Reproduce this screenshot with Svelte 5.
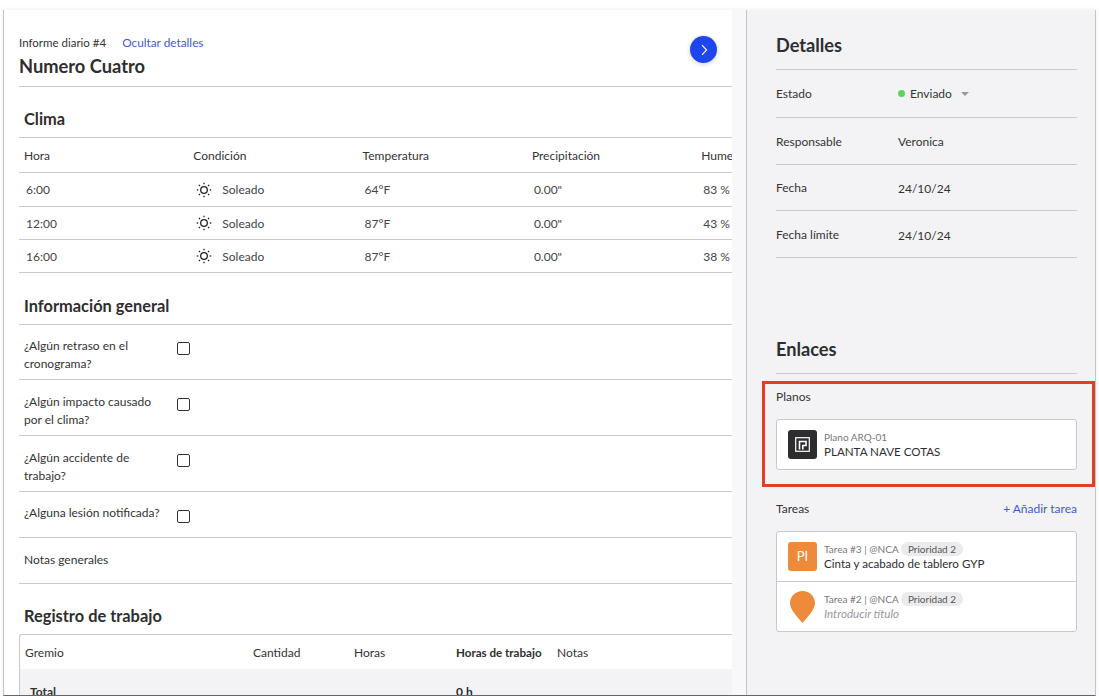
<script lang="ts">
  const weather = [
    { time: "6:00", temp: "64°F", hum: "83 %" },
    { time: "12:00", temp: "87°F", hum: "43 %" },
    { time: "16:00", temp: "87°F", hum: "38 %" },
  ];
  const questions = [
    { text: "¿Algún retraso en el cronograma?", h: 55 },
    { text: "¿Algún impacto causado por el clima?", h: 56 },
    { text: "¿Algún accidente de trabajo?", h: 56 },
    { text: "¿Alguna lesión notificada?", h: 46 },
  ];
  const rays = [0, 45, 90, 135, 180, 225, 270, 315];
</script>

<div class="page">
  <div class="window">
    <main class="report">
      <header class="report-head">
        <div>
          <div class="crumbs">
            <span>Informe diario #4</span>
            <span class="link">Ocultar detalles</span>
          </div>
          <h1>Numero Cuatro</h1>
        </div>
        <button class="next" aria-label="Siguiente">
          <svg width="14" height="14" viewBox="0 0 14 14" fill="none">
            <path d="M5 2.2 9.6 7 5 11.8" stroke="#fff" stroke-width="1.1" />
          </svg>
        </button>
      </header>

      <h2 class="clima-title">Clima</h2>
      <div class="grid head">
        <span>Hora</span><span>Condición</span><span>Temperatura</span><span>Precipitación</span><span>Humedad</span>
      </div>
      {#each weather as row, i}
        <div class="grid row" class:tall={i === 0}>
          <span class="time">{row.time}</span>
          <span class="cond">
            <svg width="16" height="16" viewBox="0 0 16 16" fill="none" stroke="#222">
              <circle cx="8" cy="8" r="3.3" stroke-width="1.3" />
              {#each rays as a}
                <path d="M8 .7V2.3" stroke-width="1.3" transform="rotate({a} 8 8)" />
              {/each}
            </svg>
            Soleado
          </span>
          <span class="temp">{row.temp}</span>
          <span class="temp">0.00"</span>
          <span class="temp">{row.hum}</span>
        </div>
      {/each}

      <h2 class="info-title">Información general</h2>
      {#each questions as q, i}
        <div class="question" class:tight={i === 0} class:single={i === 3} style="height: {q.h}px">
          <span class="q-text">{q.text}</span>
          <span class="check"></span>
        </div>
      {/each}
      <div class="notes">Notas generales</div>

      <h2 class="log-title">Registro de trabajo</h2>
      <div class="log">
        <div class="log-head">
          <span class="c1">Gremio</span>
          <span class="c2">Cantidad</span>
          <span class="c3">Horas</span>
          <span class="c4"><b>Horas de trabajo</b></span>
          <span>Notas</span>
        </div>
        <div class="log-total">
          <b class="c1">Total</b>
          <span class="c2"></span>
          <span class="c3"></span>
          <b class="c4">0 h</b>
        </div>
      </div>
    </main>

    <div class="gutter"></div>

    <aside class="side">
      <h2 class="side-title">Detalles</h2>
      <div class="detail d1">
        <span>Estado</span>
        <span class="status"><i class="dot"></i>Enviado<i class="caret"></i></span>
      </div>
      <div class="detail d2"><span>Responsable</span><span>Veronica</span></div>
      <div class="detail d3"><span>Fecha</span><span class="low">24/10/24</span></div>
      <div class="detail d4"><span>Fecha límite</span><span class="low">24/10/24</span></div>

      <h2 class="side-title links">Enlaces</h2>
      <div class="sub plans">Planos</div>
      <div class="card">
        <div class="item plan-item">
          <span class="plan-icon">
            <svg width="15" height="15" viewBox="0 0 15 15" fill="none" stroke="#fff">
              <rect x="0.7" y="0.7" width="13.6" height="13.6" stroke-width="1.2" />
              <path d="M4.5 12.5V4.5H11V8.5H7.8V12.5" stroke-width="1.6" />
            </svg>
          </span>
          <div>
            <div class="meta">Plano ARQ-01</div>
            <div class="name">PLANTA NAVE COTAS</div>
          </div>
        </div>
      </div>

      <div class="sub tasks">
        <span>Tareas</span>
        <span class="link add">+ Añadir tarea</span>
      </div>
      <div class="card">
        <div class="item task">
          <span class="badge">PI</span>
          <div class="item-text">
            <div class="meta">Tarea #3 | @NCA <span class="pill">Prioridad 2</span></div>
            <div class="name">Cinta y acabado de tablero GYP</div>
          </div>
        </div>
        <div class="item task second">
          <svg class="pin" width="25" height="32" viewBox="0 0 25 32">
            <path d="M12.5 0C19.4 0 25 5.4 25 12.3 25 18.5 18 25.5 12.5 32 7 25.5 0 18.5 0 12.3 0 5.4 5.6 0 12.5 0Z" fill="#ee8a3a" />
          </svg>
          <div class="item-text">
            <div class="meta">Tarea #2 | @NCA <span class="pill">Prioridad 2</span></div>
            <div class="name empty">Introducir título</div>
          </div>
        </div>
      </div>
    </aside>
    <div class="highlight"></div>
  </div>
</div>

<style>
  :global(body) {
    margin: 0;
    background: #fff;
    font-family: Lato, "Liberation Sans", sans-serif;
    color: #333;
  }

  h1, h2 {
    margin: 0;
    color: #2e2e30;
    font-weight: 700;
  }

  .page {
    height: 696px;
    padding: 10px 3px 0 3px;
    box-sizing: border-box;
    overflow: hidden;
  }

  .window {
    position: relative;
    height: 686px;
    display: flex;
    overflow: hidden;
    border: 1px solid #c4c4c6;
    border-top: 0;
    border-bottom-color: #66666a;
    box-sizing: border-box;
    box-shadow: 0 -1px 4px rgba(0, 0, 0, 0.06);
  }

  .link { color: #3f5bd1; }

  .report {
    width: 728px;
    padding-left: 15px;
    box-sizing: border-box;
    overflow: hidden;
    font-size: 12px;
    flex: none;
  }

  .report-head {
    height: 77px;
    box-sizing: border-box;
    padding-top: 25px;
    border-bottom: 1px solid #c9c9cb;
    display: flex;
    justify-content: space-between;
    align-items: flex-start;
  }

  .crumbs {
    display: flex;
    gap: 16px;
    font-size: 11.5px;
    line-height: 16px;
  }

  .crumbs .link { font-size: 11.8px; }

  h1 {
    font-size: 18.3px;
    line-height: 24px;
    margin-top: 3px;
  }

  .next {
    width: 27px;
    height: 27px;
    margin: 1px 15px 0 0;
    padding: 0;
    border: 0;
    border-radius: 50%;
    background: #1f45ee;
    box-shadow: 0 1px 5px rgba(0, 0, 0, 0.2);
    display: flex;
    align-items: center;
    justify-content: center;
  }

  h2 {
    font-size: 16.4px;
    padding-left: 5px;
    border-bottom: 1px solid #c9c9cb;
    box-sizing: border-box;
  }

  .clima-title { height: 51px; padding-top: 22px; line-height: 20px; }
  .info-title { height: 52px; padding-top: 23px; line-height: 20px; }
  .log-title { height: 50px; padding-top: 22px; line-height: 20px; border: 0; }

  .grid {
    display: grid;
    grid-template-columns: repeat(5, 169.3px);
    align-items: center;
    border-bottom: 1px solid #c9c9cb;
    box-sizing: border-box;
    white-space: nowrap;
  }

  .grid span { padding-left: 5px; }
  .head { height: 35px; }
  .row { height: 33px; color: #444; }
  .row.tall { height: 34px; }
  .row .time { padding-left: 7px; }
  .row .temp { padding-left: 7px; }

  .cond {
    display: flex;
    align-items: center;
    gap: 10px;
    padding-left: 8px !important;
  }

  .question {
    display: flex;
    align-items: flex-start;
    padding-left: 5px;
    border-bottom: 1px solid #c9c9cb;
    box-sizing: border-box;
    line-height: 18px;
  }

  .q-text {
    width: 145px;
    margin-right: 8px;
    padding-top: 13px;
  }

  .tight .q-text, .single .q-text { padding-top: 12px; }

  .check {
    width: 11px;
    height: 11px;
    margin-top: 18px;
    border: 1.5px solid #333;
    border-radius: 2px;
  }

  .tight .check { margin-top: 17px; }

  .notes {
    height: 46px;
    padding: 0 0 2px 5px;
    display: flex;
    align-items: center;
    border-bottom: 1px solid #c9c9cb;
    box-sizing: border-box;
  }

  .log {
    border: 1px solid #c9c9cb;
    border-right: 0;
    border-bottom: 0;
    border-radius: 3px 0 0 0;
  }

  .log-head, .log-total {
    display: flex;
    white-space: nowrap;
    padding-left: 5px;
  }

  .log-head {
    height: 34px;
    align-items: center;
  }

  .log-head b { font-size: 11.6px; }

  .log-total {
    height: 40px;
    background: #f3f3f5;
    padding-top: 15px;
    padding-left: 10px;
    box-sizing: border-box;
    line-height: 16px;
  }

  .c1 { width: 228px; flex: none; }
  .c2 { width: 101px; flex: none; }
  .c3 { width: 102px; flex: none; }
  .c4 { width: 101px; flex: none; color: #2e2e30; }
  .log-total .c1 { width: 223px; }

  .gutter {
    width: 14px;
    flex: none;
    background: #f8f8fa;
    border-right: 1px solid #c4c4c6;
  }

  .side {
    flex: 1;
    background: #f3f3f6;
    padding: 0 18px 0 29px;
    font-size: 12px;
  }

  .side-title {
    font-size: 18.2px;
    padding: 22px 0 0;
    height: 60px;
    line-height: 26px;
  }

  .side-title.links { margin-top: 60px; height: 56px; padding-top: 18px; }

  .detail {
    display: flex;
    align-items: center;
    border-bottom: 1px solid #c9c9cb;
    box-sizing: border-box;
  }

  .detail > span:first-child { width: 122px; flex: none; }
  .d1 { height: 48px; }
  .d2 { height: 47px; }
  .d3 { height: 46px; }
  .d4 { height: 47px; }
  .low { position: relative; top: 1px; }

  .status { display: flex; align-items: center; }

  .dot {
    width: 7px;
    height: 7px;
    border-radius: 50%;
    background: #5dd55d;
    margin-right: 5px;
  }

  .caret {
    margin-left: 9px;
    border: 4px solid transparent;
    border-top: 4px solid #9a9a9e;
    border-bottom: 0;
  }

  .sub {
    display: flex;
    justify-content: space-between;
    line-height: 16px;
  }

  .plans { margin: 15px 0 14px; }
  .tasks { margin: 31px 0 14px; }

  .card {
    background: #fff;
    border: 1px solid #c9c9cb;
    border-radius: 3px;
  }

  .item {
    height: 49px;
    padding: 0 11px;
    display: flex;
    align-items: center;
    gap: 7px;
  }

  .item.second { border-top: 1px solid #c9c9cb; }

  .item-text { padding-top: 1px; }

  .plan-icon, .badge {
    width: 29px;
    height: 29px;
    flex: none;
    border-radius: 3px;
    display: flex;
    align-items: center;
    justify-content: center;
  }

  .plan-icon { background: #2d2d2f; }
  .badge { background: #ee8a3a; color: #fff; font-size: 13px; padding-bottom: 2px; box-sizing: border-box; }
  .pin { margin: 0 2px; flex: none; }

  .meta {
    font-size: 10px;
    line-height: 14px;
    color: #77777a;
    white-space: nowrap;
  }

  .name {
    font-size: 11.6px;
    line-height: 16px;
    color: #2e2e30;
  }

  .name.empty { color: #98989b; font-style: italic; }

  .pill {
    display: inline-block;
    padding: 0 7px;
    border-radius: 7px;
    background: #ebebed;
    color: #555;
    line-height: 14px;
  }

  .highlight {
    position: absolute;
    left: 758px;
    top: 371px;
    width: 333px;
    height: 106px;
    border: 3px solid #e0401f;
    box-sizing: border-box;
  }
</style>
